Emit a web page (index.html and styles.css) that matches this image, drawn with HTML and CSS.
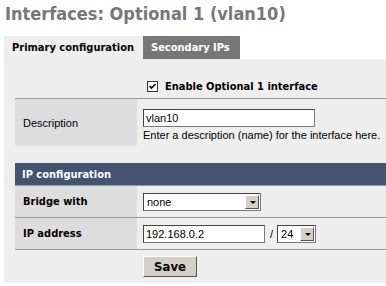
FILE: index.html
```html
<!DOCTYPE html>
<html lang="en">
<head>
    <meta charset="UTF-8">
    <title>Interfaces: Optional 1 (vlan10)</title>
    <link rel="stylesheet" href="styles.css">
</head>
<body>
    <h1 class="page-title">Interfaces: Optional 1 (vlan10)</h1>

    <div class="tabs">
        <a href="#" class="tab active">Primary configuration</a>
        <a href="#" class="tab">Secondary IPs</a>
    </div>

    <div class="panel">
        <table class="form">
            <tr class="enable-row">
                <td class="label-cell blank"></td>
                <td class="value-cell">
                    <label class="enable">
                        <span class="checkbox"><svg width="9" height="9" viewBox="0 0 9 9"><path d="M1.5 4 L3.5 6 L7.5 2" fill="none" stroke="#000" stroke-width="1.6"/></svg></span>
                        Enable Optional 1 interface
                    </label>
                </td>
            </tr>
            <tr class="line-row">
                <td class="label-cell">Description</td>
                <td class="value-cell">
                    <div class="textbox wide">vlan10</div>
                    <div class="hint">Enter a description (name) for the interface here.</div>
                </td>
            </tr>
            <tr class="spacer"><td colspan="2"></td></tr>
            <tr>
                <td colspan="2" class="section">IP configuration</td>
            </tr>
            <tr class="line-row">
                <td class="label-cell bold">Bridge with</td>
                <td class="value-cell">
                    <div class="select bridge"><span>none</span><span class="arrow"></span></div>
                </td>
            </tr>
            <tr class="line-row">
                <td class="label-cell bold">IP address</td>
                <td class="value-cell">
                    <div class="ip-line">
                        <div class="textbox ip">192.168.0.2</div>
                        <span class="slash">/</span>
                        <div class="select mask"><span>24</span><span class="arrow"></span></div>
                    </div>
                </td>
            </tr>
            <tr class="line-row save-row">
                <td class="blank-cell"></td>
                <td class="value-cell"><button class="save">Save</button></td>
            </tr>
        </table>
    </div>
</body>
</html>
```

FILE: styles.css
```css
body {
    margin: 0;
    padding: 0;
    background-color: white;
    font-family: "Liberation Sans", Arial, sans-serif;
    font-size: 11px;
    color: black;
}
/* Teks tebal memakai huruf yang lebih mirip Tahoma Bold */
.page-title,
.tab,
.enable,
.section,
.label-cell.bold,
.save {
    font-family: "DejaVu Sans Condensed", "DejaVu Sans", sans-serif;
    font-weight: bold;
}
.page-title {
    margin: 0;
    padding: 3px 0 0 5px;
    height: 33px;
    font-size: 18px;
    line-height: 22px;
    color: #777;
}
.tabs {
    display: flex;
    margin-left: 4px;
    height: 23px;
}
.tab {
    display: flex;
    align-items: center;
    box-sizing: border-box;
    width: 97px;
    padding: 0 8px;
    text-decoration: none;
    color: white;
    background-color: #777;
}
.tab.active {
    width: 139px;
    color: black;
    background-color: #eee;
}
.panel {
    margin-left: 4px;
    background-color: #eee;
    padding: 0 0 3px 11px;
    height: 221px;
}
.form {
    width: 100%;
    border-collapse: collapse;
}
.form td {
    padding: 0;
    vertical-align: middle;
}
.enable-row td {
    height: 18px;
    padding-top: 21px;
    vertical-align: top;
}
.line-row td {
    border-top: 1px solid #999;
}
.save-row td {
    height: 32px;
}
.label-cell {
    width: 114px;
    padding-left: 8px !important;
    background-color: #ddd;
}
.label-cell.blank,
.blank-cell {
    background-color: transparent;
}
.label-cell.bold {
    height: 31px;
}
.value-cell {
    padding-left: 6px !important;
}
.enable {
    display: flex;
    align-items: center;
    gap: 7px;
}
.checkbox {
    display: inline-flex;
    align-items: center;
    justify-content: center;
    width: 9px;
    height: 9px;
    border: 1px solid #333;
    background: white;
    margin-left: 4px;
}
.textbox {
    box-sizing: border-box;
    height: 18px;
    background: white;
    border: 1px solid #7a7a7a;
    border-top-color: #444;
    border-left-color: #444;
    padding: 1px 2px;
    font-size: 11px;
    line-height: 14px;
}
.textbox.wide {
    width: 172px;
    margin-top: 10px;
}
.hint {
    margin: 2px 0 5px;
}
.section {
    height: 22px;
    background-color: #435370;
    color: white;
    padding-left: 7px !important;
}
.spacer td {
    height: 17px;
}
.select {
    box-sizing: border-box;
    display: flex;
    align-items: center;
    justify-content: space-between;
    height: 18px;
    background: white;
    border: 1px solid #7a7a7a;
    border-top-color: #444;
    border-left-color: #444;
    padding-left: 3px;
}
.select.bridge {
    width: 118px;
}
.select.mask {
    width: 39px;
}
.arrow {
    width: 14px;
    height: 14px;
    margin-right: 1px;
    background: #d4d0c8;
    border: 1px solid #fff;
    border-right-color: #555;
    border-bottom-color: #555;
    box-sizing: border-box;
    position: relative;
}
.arrow::after {
    content: "";
    position: absolute;
    left: 4px;
    top: 5px;
    border-left: 3px solid transparent;
    border-right: 3px solid transparent;
    border-top: 3px solid black;
}
.ip-line {
    display: flex;
    align-items: center;
    gap: 3px;
}
.textbox.ip {
    width: 122px;
}
.slash {
    margin: 0 1px 0 2px;
}
.save {
    font-size: 13px;
    width: 54px;
    height: 21px;
    padding: 0;
    background: #d4d0c8;
    border: 1px solid #fff;
    border-right-color: #555;
    border-bottom-color: #555;
}
```
